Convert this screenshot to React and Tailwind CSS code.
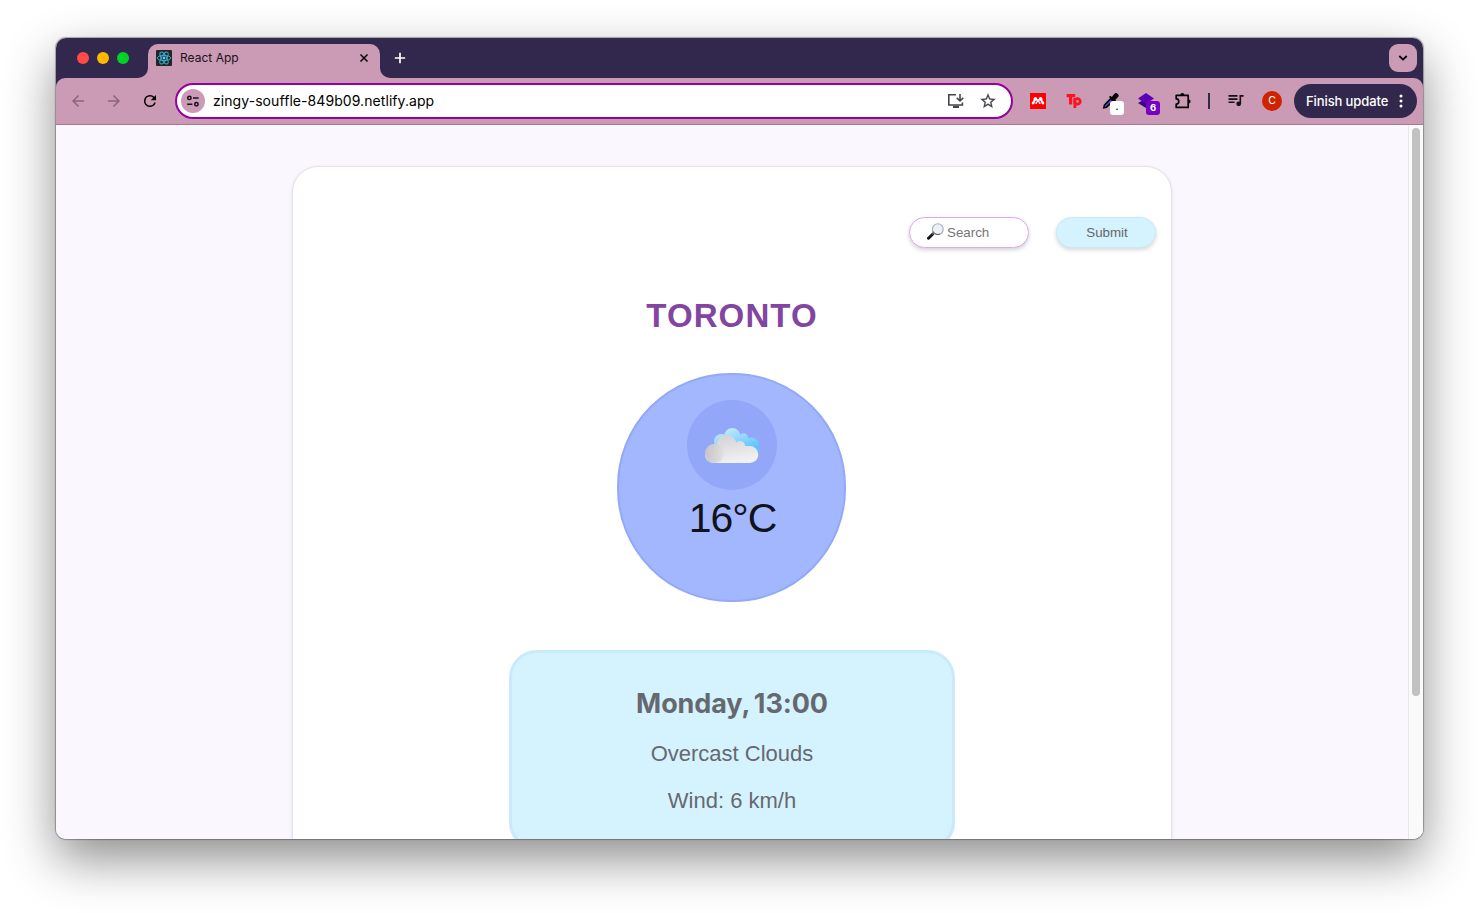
import React from "react";

const Icon = ({ size = 20, children, ...rest }) => (
  <svg width={size} height={size} viewBox="0 0 24 24" fill="currentColor" {...rest}>
    {children}
  </svg>
);

const Slot = ({ children }) => (
  <div className="flex h-9 w-9 shrink-0 items-center justify-center">{children}</div>
);

function TabStrip() {
  return (
    <div className="flex h-10 shrink-0 bg-[#32284d] pl-[21px]">
      <div className="flex h-10 items-center gap-2">
        <span className="h-3 w-3 rounded-full bg-[#ff4a47]" />
        <span className="h-3 w-3 rounded-full bg-[#ffb900]" />
        <span className="h-3 w-3 rounded-full bg-[#00d127]" />
      </div>
      <svg className="mt-[30px] ml-[9px]" width="10" height="10">
        <path d="M10 0A10 10 0 0 1 0 10H10Z" fill="#cb9ab4" />
      </svg>
      <div className="mt-1.5 flex h-[34px] w-[232px] items-center rounded-t-[10px] bg-[#cb9ab4] pb-1.5 pr-2.5 pl-2">
        <svg width="16" height="16" viewBox="0 0 16 16">
          <rect width="16" height="16" rx="1" fill="#242424" />
          <g fill="none" stroke="#35b5d6" strokeWidth="0.9">
            <ellipse cx="8" cy="8" rx="6.7" ry="2.6" />
            <ellipse cx="8" cy="8" rx="6.7" ry="2.6" transform="rotate(60 8 8)" />
            <ellipse cx="8" cy="8" rx="6.7" ry="2.6" transform="rotate(120 8 8)" />
          </g>
          <circle cx="8" cy="8" r="1.4" fill="#4fd0f0" />
        </svg>
        <span className="ml-2 text-[12px] tracking-[0.02px] text-[#1b1118]">React App</span>
        <svg className="ml-auto" width="12" height="12" viewBox="0 0 12 12" stroke="#000" strokeWidth="1.5">
          <path d="M2.5 2.5L9.5 9.5M9.5 2.5L2.5 9.5" />
        </svg>
      </div>
      <svg className="mt-[30px]" width="10" height="10">
        <path d="M0 0A10 10 0 0 0 10 10H0Z" fill="#cb9ab4" />
      </svg>
      <svg className="mt-[14px] ml-1" width="12" height="12" stroke="#fff" strokeWidth="1.7">
        <path d="M6 0.8V11.2M0.8 6H11.2" />
      </svg>
      <div className="mt-1.5 mr-1.5 ml-auto flex h-7 w-7 items-center justify-center rounded-[9px] bg-[#cb9ab4]">
        <svg width="10" height="8" fill="none" stroke="#000" strokeWidth="1.8">
          <path d="M1.3 2L5 5.6L8.7 2" />
        </svg>
      </div>
    </div>
  );
}

function AddressBar() {
  return (
    <div className="ml-[7px] flex h-9 w-[838px] shrink-0 items-center rounded-full border-2 border-[#9500a0] bg-white pl-1">
      <div className="flex h-6 w-6 items-center justify-center rounded-full bg-[#cb9ab4]">
        <svg width="14" height="14" viewBox="0 0 14 14" fill="none" stroke="#17101a" strokeWidth="1.5">
          <circle cx="3.4" cy="3.9" r="1.7" />
          <path d="M7 3.9H12.6M1.2 10.2H6.4" />
          <circle cx="10.4" cy="10.2" r="1.7" />
        </svg>
      </div>
      <span className="mb-0.5 ml-2 text-[14px] tracking-[0.07px] text-black">zingy-souffle-849b09.netlify.app</span>
      <svg className="ml-auto" width="18" height="16" viewBox="0 0 18 16" fill="none" stroke="#45444a" strokeWidth="1.6">
        <path d="M9 1.8H1.8V12H15.4V9.4" />
        <path d="M6 13.8H12" strokeWidth="2.2" />
        <path d="M13 1V7.6M9.8 4.9L13 8L16.2 4.9" />
      </svg>
      <svg className="mr-[14px] ml-3.5" width="18" height="18" viewBox="0 0 24 24" fill="#45444a">
        <path
          d="M22 9.24l-7.19-.62L12 2 9.19 8.63 2 9.24l5.46 4.73L5.82 21 12 17.27 18.18 21l-1.63-7.03L22 9.24zM12 15.4l-3.76 2.27 1-4.28-3.32-2.88 4.38-.38L12 6.1l1.71 4.04 4.38.38-3.32 2.88 1 4.28L12 15.4z"
          stroke="#45444a"
          strokeWidth="0.3"
        />
      </svg>
    </div>
  );
}

function Toolbar() {
  return (
    <div className="bg-[#32284d]">
      <div className="flex h-[47px] shrink-0 items-center rounded-t-[9px] border-b border-[#a27a90] bg-[#cb9ab4] pl-1">
        <Slot>
          <Icon size={18} className="text-[#8b6679]">
            <path d="M20 11H7.83l5.59-5.59L12 4l-8 8 8 8 1.41-1.41L7.83 13H20v-2z" />
          </Icon>
        </Slot>
        <Slot>
          <Icon size={18} className="text-[#8b6679]">
            <path d="M12 4l-1.41 1.41L16.17 11H4v2h12.17l-5.58 5.59L12 20l8-8z" />
          </Icon>
        </Slot>
        <Slot>
          <Icon size={18}>
            <path d="M17.65 6.35A7.96 7.96 0 0 0 12 4a8 8 0 1 0 7.73 10h-2.08A6 6 0 1 1 12 6c1.66 0 3.14.69 4.22 1.78L13 11h7V4l-2.35 2.35z" />
          </Icon>
        </Slot>
        <AddressBar />
        <div className="ml-[7px] flex">
          <Slot>
            <svg width="16" height="16">
              <rect width="16" height="16" fill="#ff0000" />
              <g fill="#fff">
                <circle cx="5.4" cy="5.8" r="1.8" />
                <circle cx="10.6" cy="5.8" r="1.8" />
                <circle cx="8" cy="7.8" r="1.7" />
                <circle cx="3.1" cy="10" r="1.4" />
                <circle cx="12.9" cy="10" r="1.4" />
                <circle cx="6.3" cy="10" r="0.9" />
                <circle cx="9.7" cy="10" r="0.9" />
                <path d="M3.9 5.8H6.4L4.3 10.2H2.4ZM12.1 5.8H9.6L11.7 10.2H13.6Z" />
              </g>
            </svg>
          </Slot>
          <Slot>
            <svg width="16" height="16" fill="none" stroke="#ff1220" strokeWidth="3.2">
              <path d="M0.6 2.6H9.2M4.6 2.6V11.4" />
              <path d="M8.9 5V15" strokeWidth="2.8" />
              <circle cx="11.4" cy="8.4" r="2.8" strokeWidth="2.8" />
            </svg>
          </Slot>
          <Slot>
            <div className="relative h-4 w-4">
              <svg width="18" height="18" viewBox="0 0 18 18">
                <path d="M1.8 14.8L2.4 12.2L8.6 5.6L11 8L4.5 14.3Z" fill="#3b49d8" stroke="#000" strokeWidth="1.5" />
                <path d="M7 4L8.4 2.8L9.8 4L12 1.2A2.3 2.3 0 0 1 16 4.3L13.3 6.8L14.4 8.4L13 9.6Z" fill="#000" />
              </svg>
              <span className="absolute top-2 left-2 flex h-3.5 w-3.5 items-center justify-center rounded-[3px] bg-white pb-1 text-[9px] leading-none font-bold text-black">.</span>
            </div>
          </Slot>
          <Slot>
            <div className="relative h-4 w-4">
              <svg width="16" height="16">
                <path d="M0 10L8 5.5L16 10L8 15Z" fill="#34077c" />
                <path d="M0 5.5L8 0L16 5.5L8 11Z" fill="#5a00b5" />
              </svg>
              <span className="absolute top-2 left-2 flex h-3.5 w-3.5 items-center justify-center rounded-[3px] bg-[#7700c4] text-[9.5px] leading-none font-bold text-white">6</span>
            </div>
          </Slot>
          <Slot>
            <svg className="ml-0.5" width="18" height="18" viewBox="0 0 18 18">
              <path d="M2.2 3.4H14.2V15.4H2.2V12A2.6 2.6 0 0 0 2.2 6.8Z" fill="none" stroke="#000" strokeWidth="1.7" strokeLinejoin="round" />
              <path d="M6.3 3A2 2 0 0 1 10.3 3ZM14.6 7.4A2 2 0 0 1 14.6 11.4Z" fill="#000" />
            </svg>
          </Slot>
        </div>
        <div className="mx-2 h-4 w-0.5 bg-[#32284d]" />
        <Slot>
          <svg width="16" height="14" viewBox="0 0 16 14" fill="none" stroke="#141014" strokeWidth="1.6">
            <path d="M0.5 1.9H9.5M0.5 5.1H9.5M0.5 8.3H6.5" />
            <path d="M12.3 10V1.9H15.6" />
            <circle cx="10.7" cy="9.8" r="2.4" fill="#141014" stroke="none" />
          </svg>
        </Slot>
        <Slot>
          <span className="flex h-5 w-5 items-center justify-center rounded-full bg-[#cf2200] text-[10.5px] text-white">C</span>
        </Slot>
        <div className="ml-1 flex h-[34px] w-[123px] shrink-0 items-center rounded-full bg-[#32284d] pl-3">
          <span className="mt-0.5 text-[13px] font-medium tracking-[-0.1px] whitespace-nowrap text-white">Finish update</span>
          <svg className="mr-3.5 ml-auto" width="4" height="14" fill="#fff">
            <circle cx="2" cy="2" r="1.5" />
            <circle cx="2" cy="7" r="1.5" />
            <circle cx="2" cy="12" r="1.5" />
          </svg>
        </div>
      </div>
    </div>
  );
}

function CloudIcon() {
  return (
    <svg width="55" height="36" viewBox="0 0 55 36">
      <defs>
        <linearGradient id="sky" gradientUnits="userSpaceOnUse" x1="26" y1="0" x2="34" y2="25">
          <stop offset="0" stopColor="#bfe8ff" />
          <stop offset="1" stopColor="#5cc4fb" />
        </linearGradient>
        <linearGradient id="front" gradientUnits="userSpaceOnUse" x1="24" y1="7" x2="29" y2="35">
          <stop offset="0" stopColor="#d4d4d6" />
          <stop offset="1" stopColor="#f2f2f2" />
        </linearGradient>
        <linearGradient id="puff" x1="0" y1="0.4" x2="1" y2="0.6">
          <stop offset="0" stopColor="#c4c4c6" />
          <stop offset="1" stopColor="#e2e2e2" />
        </linearGradient>
      </defs>
      <g transform="translate(0 1)">
        <g fill="url(#sky)">
          <circle cx="27.3" cy="8.3" r="8.3" />
          <circle cx="16.5" cy="13.5" r="7.5" />
          <circle cx="38.5" cy="9.8" r="4.6" />
          <circle cx="46.4" cy="17" r="7.5" />
          <path d="M16 12H38L53.9 17V24H16Z" />
        </g>
        <g fill="url(#front)">
          <circle cx="21.7" cy="17" r="10" />
          <circle cx="35" cy="18" r="5" />
          <rect x="0" y="18" width="53.3" height="17" rx="8.5" />
          <path d="M12 20H40V26H12Z" />
        </g>
        <circle cx="9.6" cy="25.4" r="9.6" fill="url(#puff)" />
      </g>
    </svg>
  );
}

function MagnifierIcon() {
  return (
    <svg className="mb-0.5" width="17" height="17" viewBox="0 0 17 17">
      <path d="M1.5 15.2L5.6 11.2" stroke="#17191c" strokeWidth="3" strokeLinecap="round" />
      <path d="M5.2 11.4L7 9.6" stroke="#4b4f55" strokeWidth="1.6" />
      <circle cx="10.8" cy="6.2" r="5.4" fill="#edf1f5" stroke="#a3abb3" strokeWidth="1.1" />
      <path d="M6 8.4A5.4 5.4 0 0 0 13 11.1" fill="none" stroke="#5a6067" strokeWidth="1" />
    </svg>
  );
}

function WeatherCard() {
  return (
    <main className="mx-auto mt-[42px] flex h-[900px] w-[878px] flex-col items-center rounded-t-[25px] bg-white font-['Liberation_Sans',Arial,sans-serif] shadow-[0_0_0_1px_rgba(60,50,90,0.06),0_1px_4px_rgba(60,50,90,0.16)]">
      <form className="mt-[50px] mr-[15px] flex h-[31px] gap-[27px] self-end">
        <label className="flex h-[31px] w-[120px] items-center rounded-full border border-[#dfa6f8] bg-white pl-[17px] shadow-[0_2px_4px_rgba(0,0,0,0.18)]">
          <MagnifierIcon />
          <input
            className="ml-[3px] w-[60px] bg-transparent text-[13.33px] outline-none placeholder:text-[#757575]"
            placeholder="Search"
          />
        </label>
        <button
          type="button"
          className="h-[31px] w-[100px] rounded-full border border-[#c8e9fb] bg-[#d5f3ff] pl-0.5 text-[13.33px] text-[#65676c] shadow-[0_2px_4px_rgba(0,0,0,0.16)]"
        >
          Submit
        </button>
      </form>
      <h1 className="mt-12 h-10 text-[33px] leading-10 font-bold tracking-[1.1px] text-[#8245a2]">TORONTO</h1>
      <section className="mt-[37px] mr-px flex h-[229px] w-[229px] shrink-0 flex-col items-center rounded-[113px] border-2 border-[#93a8f7] bg-[#a3b7ff] pt-[25px]">
        <div className="ml-px flex h-[90px] w-[90px] shrink-0 items-center justify-center rounded-full bg-[#93a7f8]">
          <CloudIcon />
        </div>
        <p className="mt-1 ml-0.5 text-[41px] leading-[48px] tracking-[-1px] text-[#101319]">16°C</p>
      </section>
      <section className="mt-12 flex h-[200px] w-[446px] shrink-0 flex-col items-center rounded-[28px] border-[3px] border-[#c9e9fc] bg-[#d5f3ff] pt-[33px] text-[#65696f]">
        <h2 className="h-9 font-['Inter',sans-serif] text-[27px] leading-9 font-bold tracking-[-0.1px] [word-spacing:-2px]">Monday, 13:00</h2>
        <p className="mt-[18px] text-[22px] leading-7">Overcast Clouds</p>
        <p className="mt-[19px] text-[22px] leading-7">Wind: 6 km/h</p>
      </section>
    </main>
  );
}

export default function App() {
  return (
    <div className="h-[913px] w-[1479px] overflow-hidden bg-white pt-[38px] pl-14 font-['Inter',sans-serif]">
      <div className="flex h-[801px] w-[1367px] flex-col overflow-hidden rounded-[10px] shadow-[0_0_1px_1px_rgba(0,0,0,0.3),0_20px_50px_rgba(0,0,0,0.45)]">
        <TabStrip />
        <Toolbar />
        <div className="flex min-h-0 flex-1 bg-[#faf7ff]">
          <div className="w-[1352px] overflow-hidden">
            <WeatherCard />
          </div>
          <div className="flex w-[15px] justify-center border-l border-[#e7e7e7] bg-[#fafafa] pt-[3px]">
            <div className="h-[568px] w-2 rounded-full bg-[#c1c1c1]" />
          </div>
        </div>
      </div>
    </div>
  );
}
